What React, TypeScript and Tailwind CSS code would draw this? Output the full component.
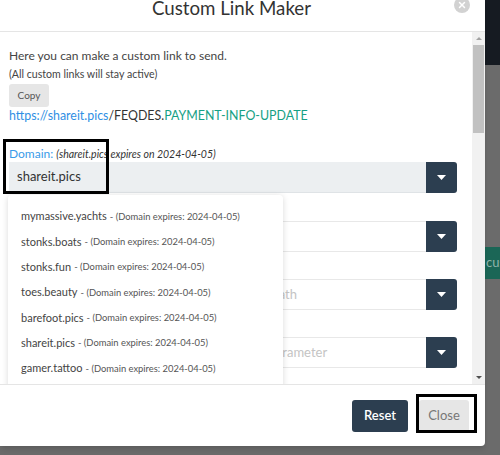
import { X } from "lucide-react";

const domains = [
  "mymassive.yachts",
  "stonks.boats",
  "stonks.fun",
  "toes.beauty",
  "barefoot.pics",
  "shareit.pics",
  "gamer.tattoo",
  "pizza.party",
];

function Caret() {
  return (
    <svg width="9" height="5" viewBox="0 0 9 5">
      <path d="M0 0h9L4.5 5z" fill="#fff" />
    </svg>
  );
}

function SelectBox({ placeholder, active }: { placeholder?: string; active?: boolean }) {
  return (
    <div className="flex h-[31px]">
      <div
        className={
          active
            ? "flex flex-1 items-center border-b border-[#dfe3e6] bg-[#eceff1] pl-[8px] text-[13px] text-[#333]"
            : "flex flex-1 items-center justify-center border-y border-[#e8e8e8] bg-white pr-[12px] text-[13px] text-[#c4c4c4]"
        }
      >
        {active ? "shareit.pics" : placeholder}
      </div>
      <div className="flex w-[31px] items-center justify-center rounded-r-[3px] bg-[#2c3e50]">
        <Caret />
      </div>
    </div>
  );
}

export default function App() {
  return (
    <div className="relative h-[455px] w-[500px] overflow-hidden bg-[#6b6b6b] [font-family:Lato,sans-serif]">
      {/* page behind the overlay */}
      <div className="h-[65px] bg-[#161b22]" />
      <div className="mt-[182px] flex pl-[480px]">
        <div className="flex h-[32px] items-center whitespace-nowrap rounded-[3px] bg-[#1b6656] pl-[6px] pr-[10px] text-[13px] text-[#8fb3aa]">
          custom links
        </div>
      </div>

      {/* modal */}
      <div className="absolute left-0 top-0 flex h-[446px] w-[485px] flex-col rounded-br-[4px] bg-white shadow-md">
        <div className="relative flex h-[32px] shrink-0 justify-center border-b border-[#e5e5e5] pr-[22px]">
          <h1 className="-mt-[4px] text-[18.7px] leading-[24px] text-[#333]">Custom Link Maker</h1>
          <div className="absolute right-[15px] top-[-3px] flex h-[16px] w-[16px] items-center justify-center rounded-full bg-[#d2d2d2]">
            <X size={10} strokeWidth={3.5} color="#fff" />
          </div>
        </div>

        <div className="relative flex min-h-0 flex-1 overflow-hidden">
          <div className="flex-1 pl-[9px] pr-[15px] pt-[16px]">
            <p className="text-[12px] leading-[16px] text-[#444]">Here you can make a custom link to send.</p>
            <p className="mt-[3px] text-[10.6px] leading-[14px] text-[#444]">(All custom links will stay active)</p>
            <button className="mt-[3px] h-[23px] w-[40px] rounded-[3px] bg-[#e6e6e6] text-[10px] text-[#555]">Copy</button>
            <p className="mt-[1px] text-[12.4px] leading-[16px]">
              <span className="text-[#2f8fe4]">https://shareit.pics</span>
              <span className="text-[#333]">/FEQDES.</span>
              <span className="text-[#16a085]">PAYMENT-INFO-UPDATE</span>
            </p>

            <div className="mt-[22px] text-[12px] leading-[16px]">
              <span className="text-[#3a9be8]">Domain: </span>
              <span className="text-[10.5px] italic text-[#333]">(shareit.pics expires on 2024-04-05)</span>
            </div>
            <SelectBox active />

            <div className="h-[28px]" />
            <SelectBox placeholder="Choose a subdomain" />
            <div className="h-[27px]" />
            <SelectBox placeholder="Choose or type a custom path" />
            <div className="h-[27px]" />
            <SelectBox placeholder="Choose or type a custom URL parameter" />
            <div className="h-[27px]" />
            <SelectBox placeholder="Choose a tracking option" />
          </div>

          {/* scrollbar */}
          <div className="flex w-[13px] shrink-0 flex-col bg-[#f1f1f1]">
            <div className="flex h-[13px] items-center justify-center">
              <svg width="6" height="3" viewBox="0 0 6 3">
                <path d="M0 3h6L3 0z" fill="#a3a3a3" />
              </svg>
            </div>
            <div className="mx-[1px] h-[88px] bg-[#c1c1c1]" />
            <div className="flex-1" />
            <div className="flex h-[13px] items-center justify-center">
              <svg width="6" height="3" viewBox="0 0 6 3">
                <path d="M0 0h6L3 3z" fill="#505050" />
              </svg>
            </div>
          </div>

          {/* open dropdown */}
          <div className="absolute left-[8px] top-[163px] w-[275px] rounded-[4px] bg-white pb-[7px] pt-[9px] shadow-[0_1px_6px_rgba(0,0,0,0.15)]">
            {domains.map((d) => (
              <div key={d} className="flex h-[25.33px] items-center whitespace-nowrap pl-[13px]">
                <span className="text-[11px] text-[#444]">{d}</span>
                <span className="ml-[3px] text-[9.4px] text-[#555]">- (Domain expires: 2024-04-05)</span>
              </div>
            ))}
          </div>
        </div>

        <div className="flex h-[62px] shrink-0 items-center justify-end gap-[11px] border-t border-[#e5e5e5] pr-[16px]">
          <button className="h-[32px] w-[56px] rounded-[3px] bg-[#2c3e50] text-[13px] font-semibold text-white">Reset</button>
          <button className="h-[32px] w-[50px] rounded-[3px] bg-[#e6e6e6] text-[13px] text-[#777]">Close</button>
        </div>
      </div>

      {/* highlight boxes */}
      <div className="absolute left-[3px] top-[139px] h-[55px] w-[106px] border-[3px] border-black" />
      <div className="absolute left-[416px] top-[394px] h-[39px] w-[61px] border-[3px] border-black" />
    </div>
  );
}
